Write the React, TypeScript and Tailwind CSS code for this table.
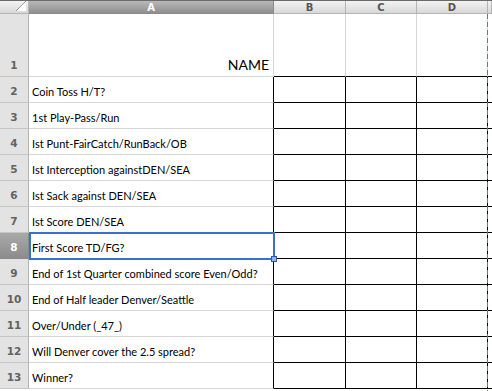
const questions = [
  "Coin Toss H/T?",
  "1st Play-Pass/Run",
  "Ist Punt-FairCatch/RunBack/OB",
  "Ist Interception againstDEN/SEA",
  "Ist Sack against DEN/SEA",
  "Ist Score DEN/SEA",
  "First Score TD/FG?",
  "End of 1st Quarter combined score Even/Odd?",
  "End of Half leader Denver/Seattle",
  "Over/Under (_47_)",
  "Will Denver cover the 2.5 spread?",
  "Winner?",
];

const SELECTED_ROW = 8;

function ColHeader({ label, active }: { label: string; active?: boolean }) {
  return (
    <div
      className={
        active
          ? "flex items-center justify-center border-r border-b border-[#8a8a8a] bg-linear-to-b from-[#b9b9b9] to-[#8f8f8f] text-[10px] font-bold text-white"
          : "flex items-center justify-center border-r border-b border-[#b4b4b4] bg-linear-to-b from-[#f3f3f3] to-[#d8d8d8] text-[10px] font-bold text-[#555]"
      }
      style={{ fontFamily: '"DejaVu Sans", sans-serif' }}
    >
      {label}
    </div>
  );
}

function RowHeader({ n }: { n: number }) {
  const active = n === SELECTED_ROW;
  return (
    <div
      className={
        active
          ? "flex items-end justify-center border-r border-b border-[#8a8a8a] bg-linear-to-b from-[#a9a9a9] to-[#8c8c8c] pb-[2px] text-[10.5px] font-bold text-white"
          : "flex items-end justify-center border-r border-b border-r-[#b4b4b4] border-b-[#c6c6c6] bg-[#e3e3e3] pb-[2px] text-[10.5px] font-bold text-[#626262]"
      }
      style={{ fontFamily: '"DejaVu Sans", sans-serif' }}
    >
      {n}
    </div>
  );
}

export default function App() {
  return (
    <div className="relative h-[391px] w-[492px] overflow-hidden bg-white">
      <div className="h-px bg-[#6a6a6a]" />
      <div className="grid grid-cols-[29px_245px_72px_71px_71px_1fr] grid-rows-[13px_63px_repeat(12,26px)]">
        <div className="relative border-r border-b border-[#b4b4b4] bg-linear-to-b from-[#f3f3f3] to-[#d8d8d8]">
          <svg className="absolute right-[2px] bottom-[2px]" width="10" height="10" viewBox="0 0 10 10">
            <polygon points="10,0 10,10 0,10" fill="#fff" />
            <line x1="0" y1="10" x2="10" y2="0" stroke="#9a9a9a" strokeWidth="1" />
          </svg>
        </div>
        <ColHeader label="A" active />
        <ColHeader label="B" />
        <ColHeader label="C" />
        <ColHeader label="D" />
        <ColHeader label="" />

        <RowHeader n={1} />
        <div
          className="flex items-end justify-end border-r border-b border-[#d6d6d6] pr-[4px] pb-[1px] text-[14px] text-black"
          style={{ fontFamily: "Lato, sans-serif" }}
        >
          NAME
        </div>
        <div className="border-r border-b border-r-[#d6d6d6] border-b-black" />
        <div className="border-r border-b border-r-[#d6d6d6] border-b-black" />
        <div className="border-r border-b border-r-[#d6d6d6] border-b-black" />
        <div className="border-b border-black" />

        {questions.map((q, i) => (
          <Row key={q} n={i + 2} text={q} />
        ))}
      </div>

      {/* page break */}
      <div className="absolute top-[14px] bottom-0 left-[487px] w-px bg-[repeating-linear-gradient(to_bottom,#4a7bd0_0,#4a7bd0_5px,transparent_5px,transparent_8px)]" />

      {/* selected cell A8 */}
      <div className="absolute top-[232px] left-[29px] h-[28px] w-[246px] border-2 border-[#3b72c9]">
        <div className="absolute -right-[4px] -bottom-[4px] h-[6px] w-[6px] border border-[#2c5aa8] bg-[#8fb4ea]" />
      </div>
    </div>
  );
}

function Row({ n, text }: { n: number; text: string }) {
  return (
    <>
      <RowHeader n={n} />
      <div
        className="flex items-end overflow-hidden border-r border-b border-r-black border-b-[#d6d6d6] pb-[2px] pl-[3px] text-[11px] whitespace-nowrap text-black"
        style={{ fontFamily: "Lato, sans-serif" }}
      >
        {text}
      </div>
      <div className="border-r border-b border-black" />
      <div className="border-r border-b border-black" />
      <div className="border-r border-b border-black" />
      <div className="border-b border-black" />
    </>
  );
}
